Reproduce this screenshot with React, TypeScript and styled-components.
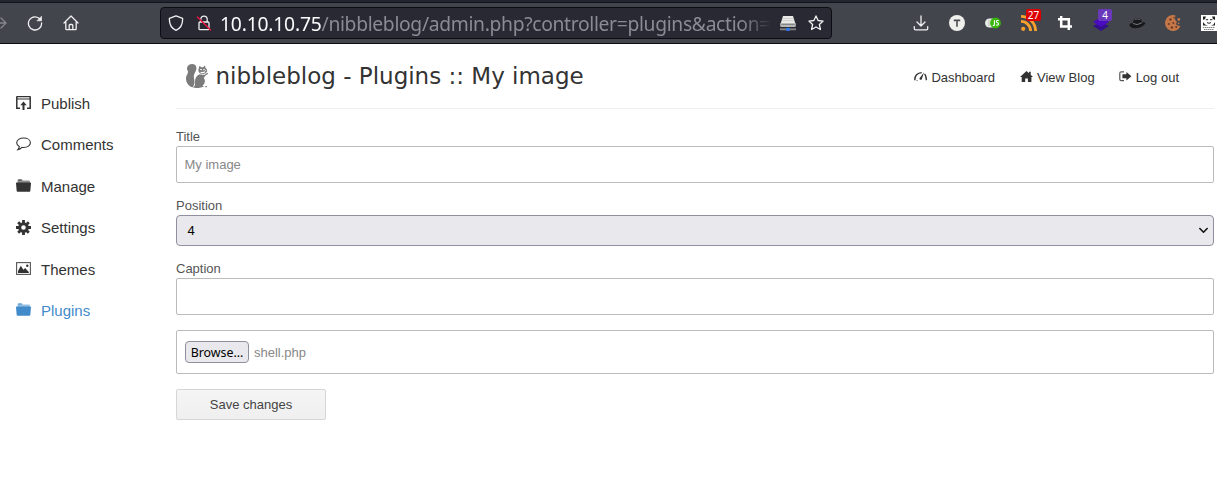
import React from 'react';
import styled, { createGlobalStyle } from 'styled-components';

const GlobalStyle = createGlobalStyle`
  *, *::before, *::after { box-sizing: border-box; }
  body {
    margin: 0;
    background: #fff;
    color: #333;
    font: 13px/20px "Liberation Sans", Arial, sans-serif;
    overflow: hidden;
  }
  svg { display: block; flex: none; }
`;

/* ---------- browser chrome ---------- */

const Toolbar = styled.header`
  display: flex;
  align-items: center;
  height: 44px;
  padding-top: 3px;
  background: #42454c;
  border-bottom: 1px solid #0c0c12;
  box-shadow: inset 0 2px #23262f, inset 0 3px #11131a;
  overflow: hidden;
`;

const NavButtons = styled.div`
  display: flex;
  flex: none;
  width: 160px;
  margin-left: -18px;
  margin-right: 18px;
`;

const ToolSlot = styled.div<{ $width?: number }>`
  position: relative;
  display: flex;
  flex: none;
  align-items: center;
  justify-content: center;
  width: ${p => p.$width ?? 36}px;
  height: 40px;
`;

const UrlBar = styled.div`
  display: flex;
  flex: none;
  align-items: center;
  width: 672px;
  height: 32px;
  padding: 0 7px;
  background: #282933;
  border: 1px solid #0c0d12;
  border-radius: 4px;
`;

const UrlIcons = styled.div<{ $gap: number }>`
  display: flex;
  flex: none;
  align-items: center;
  gap: ${p => p.$gap}px;
`;

const UrlText = styled.div`
  flex: none;
  width: 553px;
  margin: 0 6px 0 8px;
  padding-top: 1px;
  overflow: hidden;
  white-space: nowrap;
  color: #8b8b92;
  font: 19.3px/28px "Noto Sans", sans-serif;
  letter-spacing: -0.33px;
  mask-image: linear-gradient(to right, #000 calc(100% - 32px), transparent);

  strong { color: #fbfbfe; font-weight: 400; letter-spacing: -0.2px; }
`;

const Extensions = styled.div`
  display: flex;
  flex: none;
  margin-left: 71px;
`;

const Badge = styled.span<{ $color: string; $width: number }>`
  position: absolute;
  top: 6px;
  left: 15px;
  width: ${p => p.$width}px;
  height: 12px;
  border-radius: 2px;
  background: ${p => p.$color};
  color: #fff;
  font: 10px/12px "Noto Sans", sans-serif;
  text-align: center;
`;

/* ---------- admin page ---------- */

const Page = styled.div`
  display: flex;
  height: 456px;
`;

const Sidebar = styled.nav`
  flex: none;
  width: 176px;
  padding: 39px 0 0 16px;
`;

const SideLink = styled.a<{ $active?: boolean }>`
  display: flex;
  align-items: center;
  gap: 10px;
  height: 41.5px;
  font-size: 15px;
  color: ${p => (p.$active ? '#428bca' : '#333')};

  svg { margin-top: -2px; }
`;

const Main = styled.main`
  width: 1038px;
`;

const PageHeader = styled.div`
  display: flex;
  align-items: center;
  height: 65px;
  padding: 0 35px 0 9px;
  border-bottom: 1px solid #eee;
`;

const PageTitle = styled.h1`
  flex: 1;
  margin: 0 0 0 6.5px;
  font: 400 23px/30px "DejaVu Sans", sans-serif;
`;

const TopLinks = styled.div`
  display: flex;
  gap: 25px;
  padding-top: 3px;
`;

const TopLink = styled.a`
  display: flex;
  align-items: center;
  gap: 4px;

  &:last-child { margin-left: -1px; }
  svg { margin-top: -3px; }
`;

const Form = styled.form`
  display: flex;
  flex-direction: column;
  padding-top: 19px;
`;

const Field = styled.label`
  display: flex;
  flex-direction: column;
  margin-bottom: 14px;
  color: #555;
  line-height: 18px;
`;

const TextInput = styled.input`
  height: 37px;
  padding: 0 7.5px;
  border: 1px solid #bbb;
  border-radius: 2px;
  color: #888;
  font: 13px "Liberation Sans", Arial, sans-serif;
  outline: none;
`;

const SelectBox = styled.div`
  display: flex;
  align-items: center;
  justify-content: space-between;
  height: 31px;
  padding: 0 5.5px 0 10.5px;
  border: 1px solid #8f8f9d;
  border-radius: 4px;
  background: #e9e9ed;
  color: #000;
`;

const FileBox = styled.div`
  display: flex;
  align-items: center;
  gap: 5px;
  height: 44px;
  margin: 1px 0 15px;
  padding: 0 8px;
  border: 1px solid #bbb;
  border-radius: 2px;
  color: #888;
`;

const BrowseButton = styled.button`
  width: 64px;
  height: 22px;
  padding: 2px 0 0;
  border: 1px solid #8f8f9d;
  border-radius: 4px;
  background: #e9e9ed;
  color: #000;
  font: 12.4px/18px "Noto Sans", sans-serif;
`;

const FileName = styled.span`
  padding-top: 1px;
`;

const SaveButton = styled.button`
  width: 150px;
  height: 31px;
  padding: 0;
  border: 1px solid #d6d6d6;
  border-radius: 2px;
  background: linear-gradient(#f5f5f5, #efefef);
  color: #444;
  font: 13px "Liberation Sans", Arial, sans-serif;
`;

/* ---------- icons ---------- */

type StrokeProps = { size?: number; width?: number; color?: string; children: React.ReactNode };

const Stroke = ({ size = 16, width = 1.3, color = '#f0f0f2', children }: StrokeProps) => (
  <svg width={size} height={size} viewBox="0 0 16 16" fill="none" stroke={color}
    strokeWidth={width} strokeLinecap="round" strokeLinejoin="round">{children}</svg>
);

const ForwardIcon = () => <Stroke color="#85878c"><path d="M1 8h13M9 3l5 5-5 5" /></Stroke>;
const ReloadIcon = () => (
  <Stroke>
    <path d="M13.2 4.3A6.6 6.6 0 1 0 14.6 8" />
    <path d="M14.5 1.6v4.2h-4.2z" fill="#f0f0f2" strokeWidth=".7" />
  </Stroke>
);
const HomeIcon = () => (
  <Stroke>
    <path d="M1 8l7-7 7 7M2.8 7v6.8q0 .9.9.9h8.6q.9 0 .9-.9V7M6.2 14.5v-4q0-1 1-1h1.6q1 0 1 1v4" />
  </Stroke>
);
const ShieldIcon = () => <Stroke><path d="M8 .8l6.6 2.5c.3 5.6-1.6 9.7-6.6 12C3 13 1.1 8.9 1.4 3.3z" /></Stroke>;
const LockIcon = () => (
  <Stroke>
    <path d="M4.8 7V4.3a3.2 3.2 0 0 1 6.4 0V7M4 7h8q1 0 1 1v5.7q0 1-1 1H4q-1 0-1-1V8q0-1 1-1z" />
    <path d="M1.5 2L14.5 15" stroke="#e5153d" strokeWidth="1.5" />
  </Stroke>
);
const StarIcon = () => (
  <Stroke><path d="M8 .9l2.1 4.6 5 .6-3.7 3.4 1 5L8 12l-4.4 2.5 1-5L.9 6.1l5-.6z" /></Stroke>
);
const DriveIcon = () => (
  <svg width="18" height="17" viewBox="0 0 18 17">
    <path d="M4 1h10l2.500 8h-15z" fill="#e9e9e7" />
    <path d="M4 3.500h10M3.200 5.500h11.600" stroke="#c9c9c6" strokeWidth=".8" />
    <rect x="1.200" y="8" width="15.600" height="4" rx="1" fill="#b7b9b9" />
    <path d="M2.500 9.500h13" stroke="#777" strokeWidth=".8" />
    <path d="M1 14.300h16" stroke="#7c7f80" strokeWidth="2" />
    <rect x="7.300" y="12.800" width="3.400" height="3.200" rx=".6" fill="#2d78f0" />
  </svg>
);
const DownloadIcon = () => (
  <Stroke><path d="M8 .9v9.800M4 7l4 4 4-4M1.300 11.600v2q0 1.200 1.200 1.200h11q1.200 0 1.200-1.200v-2" /></Stroke>
);
const TIcon = () => (
  <svg width="16" height="16" viewBox="0 0 16 16">
    <circle cx="8" cy="8" r="8" fill="#efefec" />
    <path d="M4.800 5.400h6.400M8 5.400v6.400" stroke="#4b4d51" strokeWidth="1.600" />
  </svg>
);
const JsIcon = () => (
  <svg width="16" height="12" viewBox="0 0 16 12">
    <rect x="0" y="1.500" width="12" height="9" rx="4.500" fill="#e8ebe6" />
    <path d="M4 3v6" stroke="#b8c3b3" />
    <circle cx="10.500" cy="6" r="5.400" fill="#38b60b" />
    <path d="M9.400 3.300v4.400q0 1-1.600.7M13.700 3.700q-2.300-.6-2.300.8 0 1.100 1.200 1.300 1.100.3.900 1.600-.3 1-2.300.6" fill="none" stroke="#fff" strokeWidth="1.100" />
  </svg>
);
const RssIcon = () => (
  <svg width="16" height="16" viewBox="0 0 16 16" fill="none" stroke="#f9a02c" strokeWidth="2.800">
    <circle cx="2.200" cy="13.800" r="2.100" fill="#f9a02c" stroke="none" />
    <path d="M0 6.400a9.600 9.600 0 0 1 9.600 9.600M0 1.400A14.600 14.600 0 0 1 14.600 16" />
  </svg>
);
const CropIcon = () => (
  <svg width="14" height="14" viewBox="0 0 14 14" fill="none" stroke="#fff" strokeWidth="2.500">
    <path d="M3.200 0v10.600H14M0 3.300h10.800V14" />
  </svg>
);
const LayersIcon = () => (
  <svg width="16" height="16" viewBox="0 0 16 16">
    <path d="M0 11l8-4 8 4-8 5z" fill="#33108a" />
    <path d="M0 7l8-5 8 5-8 5z" fill="#4b0bc0" />
  </svg>
);
const HatIcon = () => (
  <svg width="17" height="11" viewBox="0 0 17 11">
    <path d="M.5 6.500C2 4.800 3 5.500 4 5 4.400 2 5.500.5 8.500.6c3 0 4 .8 4.500 3.800 1.500-.5 3 0 3.500.6C15 8 11 10.300 6.500 10.200 3 10.200.3 8.800.5 6.500z" fill="#17181b" />
    <path d="M4.100 5.500Q8 8 12.900 4.800" stroke="#777b80" strokeWidth="1" fill="none" />
    <path d="M6 1.600q2.500-1 5 0" stroke="#666a70" strokeWidth=".8" fill="none" />
  </svg>
);
const CookieIcon = () => (
  <svg width="16" height="16" viewBox="0 0 16 16">
    <path d="M10.500.4A8 8 0 1 0 15.500 11l-2.800-.5-2-1.400 1.300-2.200-2.300-2.600z" fill="#c47849" />
    <circle cx="13.800" cy="4.500" r="1.400" fill="#c47849" />
    <circle cx="13.600" cy="8.300" r=".9" fill="#c47849" />
    <g fill="#713a20">
      <circle cx="5.500" cy="4.500" r="1.200" /><circle cx="3.800" cy="9" r="1.100" />
      <circle cx="8.300" cy="7.900" r="1" /><circle cx="6.900" cy="12.500" r="1.200" />
      <circle cx="11.200" cy="12" r="1" /><circle cx="9" cy="2.500" r=".8" />
    </g>
  </svg>
);
const MaskIcon = () => (
  <svg width="16" height="16" viewBox="0 0 16 16">
    <rect width="16" height="16" fill="#fff" />
    <path d="M2 1.500h3L4 4 2 5zM11 1.500h3V5l-2-1zM2 7l2 2.500 3 1h3l2.500-1L14 7v3.500H2z" fill="#222" />
    <path d="M4.800 4.700h2.400M9 4.700h2.400M6 7.600q2 1.300 4 0" stroke="#222" fill="none" />
    <path d="M2 12.500h12M3 14.500h10" stroke="#666" strokeWidth=".8" strokeDasharray="1.500 .5" />
  </svg>
);

const SquirrelIcon = () => (
  <svg width="24" height="26" viewBox="0 0 24 26" fill="#7b7b7b">
    <path d="M8 24.300C3.500 23.500.8 19.500 1 14.700c.2-2.700 2.200-4 2-6.200C2.800 7.300 1.800 6.600 2 5 2.500 2.200 5 .7 7.500.9c3 .2 4.300 2.400 3.900 5-.4 2.700-2.500 4.400-2.600 7-.1 3 1.200 5 .6 7.600z" />
    <path d="M8 24.500c2.400-1.600 2.100-3.400 2-5.500-.2-3.700 1.500-6.200 4.600-7.700l4.800.8c.8.900.4 2.300-.7 2.900 1.400 1.400 1.600 3.300.7 5.200-.6 1.200-1.300 1.900-2 2.300l1.600.9c-1.800 1.300-8.100 2-11.400 1.100z" />
    <path d="M14 4.500l.5-1.700 1.800 1.500 1.700-.1 2-1.700.5 2.500c1.300.9 1.800 2 1.700 3.300-.9 1.700-2.200 2.500-3.800 2.600-2 .1-4-.7-4.700-2.200-.5-1.300-.3-3.100.3-4.200z" />
    <path d="M15.300 6.300l1.500.7M19.600 6.200l-1.300.9M15.600 9.200q1.800 1 4.600-.4M20.700 7.300v.6" fill="none" stroke="#fff" strokeWidth="1.100" />
    <path d="M18.500 13.300l4.300-3M20.300 23.600h1.500" stroke="#7b7b7b" strokeWidth="1.300" />
  </svg>
);
const GaugeIcon = () => (
  <svg width="13" height="11" viewBox="0 0 14 11" fill="none" stroke="#333" strokeWidth="1.500">
    <path d="M.8 9.500C.7 4.800 3.600 1.400 8.300 1.300M11.400 2.700c1.500 1.800 2 4 1.800 6.800" />
    <path d="M10.800.8L8.300 8.700a1.500 1.500 0 0 1-2.500-1.100z" fill="#333" stroke="none" />
    <path d="M2.800 9.700h1" strokeWidth="1" />
  </svg>
);
const HouseIcon = () => (
  <svg width="13" height="11" viewBox="0 0 13 11" fill="#333">
    <path d="M6.500 0L9 2.300V.8h1.700v3L13 6h-1.600v5H7.900V7.400H5.200V11H1.700V6H0z" />
  </svg>
);
const ExitIcon = () => (
  <svg width="13" height="11" viewBox="0 0 13 11">
    <path d="M5 .8H2.300Q.8.800.8 2.300v5.900q0 1.500 1.500 1.500H5" fill="none" stroke="#555" strokeWidth="1.200" />
    <path d="M3.400 3.300h4V.9l5 4.300-5 4.300V7.200h-4z" fill="#333" />
  </svg>
);
const PublishIcon = () => (
  <svg width="15" height="14" viewBox="0 0 15 14" fill="none" stroke="#333">
    <path d="M4 12.300H.8V1.200q0-.6.6-.6h12.200q.6 0 .6.600v11.100H11" strokeWidth="1.500" />
    <path d="M.8 3h13.400" strokeWidth="1" />
    <path d="M7.500 14V7.500" strokeWidth="2" />
    <path d="M4.300 9.200L7.500 5.500l3.200 3.700z" fill="#333" stroke="none" />
  </svg>
);
const CommentIcon = () => (
  <svg width="15" height="14" viewBox="0 0 15 14" fill="none" stroke="#333" strokeWidth="1.100">
    <path d="M7.600 1c3.900 0 6.800 2 6.800 4.700s-2.900 4.800-6.800 4.800q-1 0-1.700-.2Q4.200 12.400 1.900 12.700q1.300-1.300 1.400-3.300Q.7 8.200.7 5.700C.7 3 3.700 1 7.600 1z" />
  </svg>
);
const FolderIcon = ({ color = '#333' }: { color?: string }) => (
  <svg width="15" height="14" viewBox="0 0 15 14" fill={color}>
    <path d="M1.500 1.500q0-1 1-1h3.600l.8 1h6q1 0 1 1V4h-12.400z" opacity=".55" />
    <path d="M.6 3.500h13.800q.7 0 .6.700l-.7 7.800q-.1.800-.8.800h-12Q.8 12.800.7 12L0 4.200q-.1-.7.6-.7z" />
    <path d="M2.300 1h3.200" stroke={color} strokeWidth="1" />
  </svg>
);
const GearIcon = () => (
  <svg width="15" height="15" viewBox="0 0 15 15" fill="none" stroke="#333">
    <circle cx="7.500" cy="7.500" r="3.800" strokeWidth="3" />
    <path d="M7.500 0v3M7.500 12v3M0 7.500h3M12 7.500h3M2.200 2.200l2 2M10.800 10.800l2 2M12.800 2.200l-2 2M4.200 10.800l-2 2" strokeWidth="2.800" />
  </svg>
);
const PictureIcon = () => (
  <svg width="15" height="13" viewBox="0 0 15 13">
    <rect x=".6" y=".6" width="13.800" height="11.800" fill="none" stroke="#555" strokeWidth="1.100" />
    <path d="M2 10.900V9l2.800-5.200 2.600 4 1.700-1.700L12.800 10v.9z" fill="#333" />
    <circle cx="11.300" cy="3.700" r="1.200" fill="#333" />
  </svg>
);

/* ---------- data ---------- */

const extensions = [
  { id: 'download', icon: <DownloadIcon /> },
  { id: 'text', icon: <TIcon /> },
  { id: 'script', icon: <JsIcon /> },
  { id: 'feed', icon: <RssIcon />, badge: { text: '27', color: '#dc0000', width: 15 } },
  { id: 'crop', icon: <CropIcon /> },
  { id: 'layers', icon: <LayersIcon />, badge: { text: '4', color: '#6938bb', width: 14 } },
  { id: 'hat', icon: <HatIcon /> },
  { id: 'cookie', icon: <CookieIcon /> },
  { id: 'mask', icon: <MaskIcon /> },
];

const menu = [
  { label: 'Publish', icon: <PublishIcon /> },
  { label: 'Comments', icon: <CommentIcon /> },
  { label: 'Manage', icon: <FolderIcon /> },
  { label: 'Settings', icon: <GearIcon /> },
  { label: 'Themes', icon: <PictureIcon /> },
  { label: 'Plugins', icon: <FolderIcon color="#428bca" />, active: true },
];

export default function App() {
  return (
    <>
      <GlobalStyle />
      <Toolbar>
        <NavButtons>
          <ToolSlot><ForwardIcon /></ToolSlot>
          <ToolSlot $width={34}><ReloadIcon /></ToolSlot>
          <ToolSlot $width={37}><HomeIcon /></ToolSlot>
        </NavButtons>
        <UrlBar>
          <UrlIcons $gap={12}><ShieldIcon /><LockIcon /></UrlIcons>
          <UrlText><strong>10.10.10.75</strong>/nibbleblog/admin.php?controller=plugins&amp;action=</UrlText>
          <UrlIcons $gap={11}><DriveIcon /><StarIcon /></UrlIcons>
        </UrlBar>
        <Extensions>
          {extensions.map(({ id, icon, badge }) => (
            <ToolSlot key={id}>
              {icon}
              {badge && <Badge $color={badge.color} $width={badge.width}>{badge.text}</Badge>}
            </ToolSlot>
          ))}
        </Extensions>
      </Toolbar>
      <Page>
        <Sidebar>
          {menu.map(item => (
            <SideLink key={item.label} $active={item.active}>{item.icon}{item.label}</SideLink>
          ))}
        </Sidebar>
        <Main>
          <PageHeader>
            <SquirrelIcon />
            <PageTitle>nibbleblog - Plugins :: My image</PageTitle>
            <TopLinks>
              <TopLink><GaugeIcon />Dashboard</TopLink>
              <TopLink><HouseIcon />View Blog</TopLink>
              <TopLink><ExitIcon />Log out</TopLink>
            </TopLinks>
          </PageHeader>
          <Form>
            <Field>Title<TextInput defaultValue="My image" /></Field>
            <Field>
              Position
              <SelectBox>
                4
                <Stroke size={9} width={2.8} color="#111"><path d="M1.500 4.500L8 11l6.500-6.500" /></Stroke>
              </SelectBox>
            </Field>
            <Field>Caption<TextInput /></Field>
            <FileBox>
              <BrowseButton type="button">Browse…</BrowseButton>
              <FileName>shell.php</FileName>
            </FileBox>
            <SaveButton type="button">Save changes</SaveButton>
          </Form>
        </Main>
      </Page>
    </>
  );
}
